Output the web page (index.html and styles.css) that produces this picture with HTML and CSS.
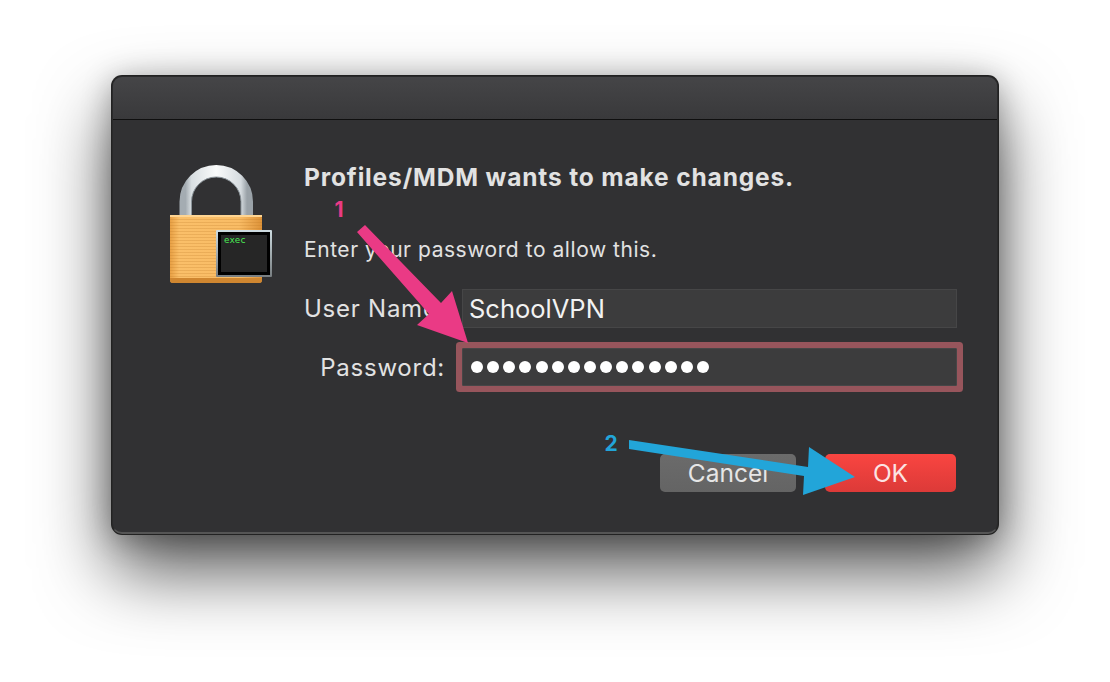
FILE: index.html
```html
<!DOCTYPE html>
<html lang="en">
<head>
  <meta charset="UTF-8">
  <title>Profiles/MDM</title>
  <link rel="stylesheet" href="styles.css">
</head>
<body>
  <div class="dialog">
    <div class="titlebar"></div>
    <div class="content">
      <div class="icon">
        <svg width="104" height="120" viewBox="0 0 104 120">
          <defs>
            <linearGradient id="shackle" x1="0" y1="0" x2="1" y2="0">
              <stop offset="0" stop-color="#a4acb2"/>
              <stop offset="0.1" stop-color="#d9dfe2"/>
              <stop offset="0.5" stop-color="#fafbfb"/>
              <stop offset="0.9" stop-color="#d5dbdf"/>
              <stop offset="1" stop-color="#9aa2a8"/>
            </linearGradient>
            <linearGradient id="brass" x1="0" y1="0" x2="1" y2="0">
              <stop offset="0" stop-color="#e8a044"/>
              <stop offset="0.1" stop-color="#fabf69"/>
              <stop offset="0.75" stop-color="#f9bc65"/>
              <stop offset="1" stop-color="#dd9238"/>
            </linearGradient>
            <pattern id="lines" width="4" height="3" patternUnits="userSpaceOnUse">
              <rect width="4" height="1" fill="#b8701e" fill-opacity="0.22"/>
            </pattern>
            <linearGradient id="bezel" x1="0" y1="0" x2="0" y2="1">
              <stop offset="0" stop-color="#cfdde2"/>
              <stop offset="1" stop-color="#777d80"/>
            </linearGradient>
          </defs>
          <path d="M15.500 52V36.750a30.750 30.750 0 0 1 61.500 0V52" fill="none" stroke="url(#shackle)" stroke-width="12"/>
          <path d="M21.500 52V36.750a24.750 24.750 0 0 1 49.500 0V52" fill="none" stroke="#8b949a" stroke-width="1"/>
          <rect x="0" y="50" width="92" height="68" rx="3" fill="url(#brass)"/>
          <rect x="0" y="50" width="92" height="68" rx="3" fill="url(#lines)"/>
          <rect x="0" y="50" width="92" height="2" fill="#ffd592"/>
          <path d="M0 113H92V115a3 3 0 0 1-3 3H3a3 3 0 0 1-3-3Z" fill="#cf8630"/>
          <rect x="46" y="65" width="56" height="47" rx="1" fill="url(#bezel)"/>
          <rect x="48" y="67" width="52" height="43" fill="#000"/>
          <rect x="51" y="70" width="46" height="37" fill="#262626"/>
          <text class="exec" x="54" y="78">exec</text>
        </svg>
      </div>
      <div class="form">
        <h1>Profiles/MDM wants to make changes.</h1>
        <p>Enter your password to allow this.</p>
        <div class="fields">
          <label>User Name:</label>
          <div class="field">SchoolVPN</div>
          <label>Password:</label>
          <div class="field focused">
            <span class="dot"></span><span class="dot"></span><span class="dot"></span><span class="dot"></span><span class="dot"></span>
            <span class="dot"></span><span class="dot"></span><span class="dot"></span><span class="dot"></span><span class="dot"></span>
            <span class="dot"></span><span class="dot"></span><span class="dot"></span><span class="dot"></span><span class="dot"></span>
          </div>
        </div>
        <div class="buttons">
          <button class="btn">Cancel</button>
          <button class="btn primary">OK</button>
        </div>
      </div>
    </div>
  </div>

  <!-- annotations drawn on top of the screenshot -->
  <svg class="marks" width="1110" height="682" viewBox="0 0 1110 682">
    <polygon fill="#ea3a85" points="365,225 441,303 452,291 468,343 417,325 429,314 357,232"/>
    <polygon fill="#22a5d9" points="629,440 808,467 809,447 855,477 803,495 804,476 629,449"/>
    <text class="num pink" x="339" y="217">1</text>
    <text class="num blue" x="611" y="451">2</text>
  </svg>
</body>
</html>
```

FILE: styles.css
```css
html, body {
  margin: 0;
  height: 682px;
  overflow: hidden;
  background-color: white;
}
body {
  padding: 76px 112px 0;
  box-sizing: border-box;
  font-family: Inter, "Noto Sans", sans-serif;
  color: #e2e2e2;
}
.dialog {
  width: 886px;
  height: 458px;
  box-sizing: border-box;
  background-color: #313133;
  border: 1px solid #2a2a2b;
  border-bottom: 2px solid #555;
  border-radius: 10px;
  overflow: hidden;
  box-shadow: 0 0 0 1px #222, 0 36px 72px rgba(0,0,0,0.68), 0 4px 30px rgba(0,0,0,0.3);
}
.titlebar {
  height: 42px;
  background: linear-gradient(#454547, #39393b);
  border-bottom: 1px solid #0f0f0f;
}
.content {
  display: flex;
  padding-left: 57px;
}
.icon {
  width: 134px;
  padding-top: 45px;
}
.icon svg {
  display: block;
}
.exec {
  font-family: "DejaVu Sans Mono", monospace;
  font-size: 9px;
  fill: #4aec55;
}
.form {
  display: flex;
  flex-direction: column;
}
h1 {
  margin: 41px 0 0;
  font-size: 24.500px;
  letter-spacing: 0.85px;
  line-height: 32px;
  font-weight: 700;
  white-space: nowrap;
}
p {
  margin: 41px 0 0;
  font-size: 21px;
  letter-spacing: 0.55px;
  line-height: 32px;
  white-space: nowrap;
}
.fields {
  display: grid;
  grid-template-columns: 141px 495px;
  column-gap: 17px;
  row-gap: 20px;
  margin-top: 23px;
  align-items: center;
  font-size: 24px;
  letter-spacing: 0.75px;
}
label {
  text-align: right;
  white-space: nowrap;
}
.field {
  height: 39px;
  box-sizing: border-box;
  display: flex;
  align-items: center;
  gap: 4px;
  padding-left: 6px;
  background-color: #3c3c3d;
  border: 1px solid #464647;
  font-size: 25.500px;
  letter-spacing: 0;
  color: #f2f2f2;
}
.focused {
  height: 38px;
  gap: 4.150px;
  padding-left: 8px;
  box-shadow: 0 0 0 6px #97555c;
  border-radius: 1px;
}
.dot {
  width: 12px;
  height: 12px;
  border-radius: 50%;
  background-color: white;
}
.buttons {
  display: flex;
  justify-content: flex-end;
  gap: 29px;
  margin: 68px 1px 0 0;
}
.btn {
  height: 38px;
  width: 136px;
  border: none;
  border-radius: 5px;
  background: linear-gradient(#6b6b6b, #646464);
  color: #e6e6e6;
  font-family: inherit;
  font-size: 24.500px;
  padding: 0;
}
.primary {
  width: 131px;
  background: linear-gradient(#f94541, #dc3a38);
  color: #fbe4e4;
}
.marks {
  position: absolute;
  left: 0;
  top: 0;
}
.num {
  font-family: Inter, sans-serif;
  font-size: 21px;
  font-weight: 700;
  text-anchor: middle;
}
.pink { fill: #ea3a85; }
.blue { fill: #22a5d9; }
```
